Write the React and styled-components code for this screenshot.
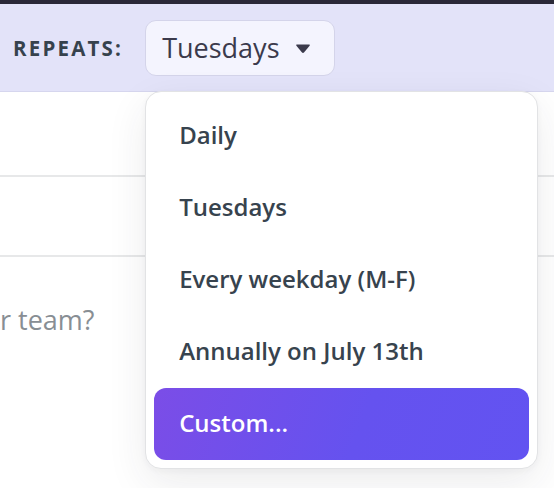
import React from "react";
import styled, { createGlobalStyle } from "styled-components";

const Global = createGlobalStyle`
  html, body { margin: 0; padding: 0; background: #ffffff; }
  body { font-family: "Open Sans", "Noto Sans", sans-serif; width: 554px; height: 488px; overflow: hidden; }
  * { box-sizing: border-box; }
`;

const Page = styled.div`
  width: 554px;
  height: 488px;
  display: flex;
  flex-direction: column;
  background: #ffffff;
  overflow: hidden;
`;

const TopStrip = styled.div`
  height: 4px;
  background: #2a2838;
  flex: none;
`;

const Header = styled.div`
  height: 88px;
  flex: none;
  background: #e3e3f9;
  border-bottom: 1px solid #d6d6ee;
  display: flex;
  align-items: center;
  padding: 0 0 0 13px;
  gap: 22px;
  position: relative;
  z-index: 2;
`;

const Label = styled.span`
  font-size: 20.5px;
  font-weight: 700;
  letter-spacing: 2.2px;
  color: #36424d;
`;

const SelectWrap = styled.div`
  position: relative;
`;

const SelectButton = styled.button`
  width: 190px;
  height: 56px;
  display: flex;
  align-items: center;
  justify-content: space-between;
  padding: 0 23px 0 16px;
  border: 1px solid #d4d4ea;
  border-radius: 11px;
  background: #f4f4fe;
  font-family: inherit;
  font-size: 27px;
  font-weight: 450;
  color: #3b3a4c;
  cursor: pointer;
`;

const Caret = styled.svg`
  width: 16px;
  height: 11px;
  flex: none;
  margin-top: 2px;
`;

const Menu = styled.ul`
  position: absolute;
  top: 71px;
  left: 0;
  width: 393px;
  margin: 0;
  padding: 8px;
  list-style: none;
  background: #ffffff;
  border: 1px solid #e2e3e5;
  border-radius: 16px;
  box-shadow: 0 14px 40px rgba(40, 44, 60, 0.09), 0 2px 6px rgba(40, 44, 60, 0.04);
`;

const Item = styled.li`
  height: 72px;
  display: flex;
  align-items: center;
  padding: 0 0 2px 25px;
  border-radius: 12px;
  font-size: 24px;
  font-weight: 570;
  color: ${(p) => (p.$active ? "#ffffff" : "#37434e")};
  background: ${(p) =>
    p.$active ? "linear-gradient(110deg, #7b4de7 0%, #6552ef 55%, #6253f1 100%)" : "transparent"};
`;

const Body = styled.div`
  display: flex;
  flex-direction: column;
`;

const Row = styled.div`
  height: ${(p) => p.$h}px;
  border-bottom: ${(p) => (p.$line ? "2px solid #e7e8e9" : "none")};
  display: flex;
  align-items: flex-start;
`;

const Placeholder = styled.span`
  font-size: 27px;
  font-weight: 400;
  line-height: 36px;
  color: #888e94;
  margin-top: 45px;
`;

const options = ["Daily", "Tuesdays", "Every weekday (M-F)", "Annually on July 13th", "Custom..."];

export default function App() {
  return (
    <Page>
      <Global />
      <TopStrip />
      <Header>
        <Label>REPEATS:</Label>
        <SelectWrap>
          <SelectButton>
            Tuesdays
            <Caret viewBox="0 0 16 11">
              <path d="M2 1.5 H14 Q15.5 1.5 14.6 2.8 L9.2 9.3 Q8 10.6 6.8 9.3 L1.4 2.8 Q0.5 1.5 2 1.5 Z" fill="#3b3a4c" />
            </Caret>
          </SelectButton>
          <Menu>
            {options.map((o) => (
              <Item key={o} $active={o === "Custom..."}>
                {o}
              </Item>
            ))}
          </Menu>
        </SelectWrap>
      </Header>
      <Body>
        <Row $h={85} $line />
        <Row $h={80} $line />
        <Row $h={130}>
          <Placeholder>r team?</Placeholder>
        </Row>
      </Body>
    </Page>
  );
}
